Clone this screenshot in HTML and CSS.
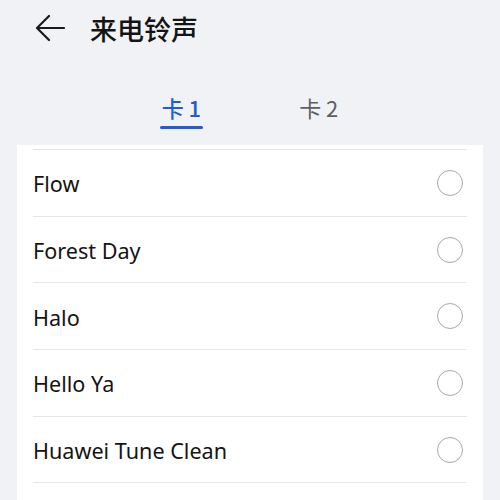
FILE: index.html
```html
<!DOCTYPE html>
<html lang="zh">
<head>
<meta charset="utf-8">
<link rel="stylesheet" href="styles.css">
</head>
<body>
<div class="screen">
  <header class="topbar">
    <svg class="back" width="30" height="28" viewBox="0 0 30 28">
      <path d="M2 14 H29 M14 2 L2 14 L14 26" fill="none" stroke="#1a1a1a" stroke-width="2.2" stroke-linecap="round" stroke-linejoin="round"/>
    </svg>
    <h1 class="title">来电铃声</h1>
  </header>
  <nav class="tabs">
    <div class="tab active">卡 1</div>
    <div class="tab">卡 2</div>
  </nav>
  <section class="card">
    <div class="lead"></div>
    <div class="row"><span class="name">Flow</span><span class="radio"></span></div>
    <div class="row"><span class="name">Forest Day</span><span class="radio"></span></div>
    <div class="row"><span class="name">Halo</span><span class="radio"></span></div>
    <div class="row"><span class="name">Hello Ya</span><span class="radio"></span></div>
    <div class="row"><span class="name">Huawei Tune Clean</span><span class="radio"></span></div>
    <div class="row"><span class="name"></span></div>
  </section>
</div>
</body>
</html>
```
FILE: styles.css
```css
html, body {
  margin: 0;
  padding: 0;
  background: #f1f2f5;
}
.screen {
  width: 500px;
  height: 500px;
  overflow: hidden;
  font-family: "Noto Sans", "Noto Sans CJK SC", sans-serif;
  color: #141414;
}
.topbar {
  height: 56px;
  display: flex;
  align-items: center;
  padding-left: 35px;
  box-sizing: border-box;
}
.back {
  display: block;
}
.title {
  margin: 0 0 0 25px;
  font-family: "Noto Sans CJK SC", sans-serif;
  font-size: 27px;
  font-weight: 500;
  line-height: 1;
  color: #141414;
}
.tabs {
  height: 89px;
  display: flex;
  justify-content: center;
  gap: 94px;
  padding-top: 36px;
  box-sizing: border-box;
}
.tab {
  font-family: "Noto Sans CJK SC", sans-serif;
  font-size: 22px;
  line-height: 30px;
  height: 37px;
  color: #5f5f5f;
  padding: 0 2px;
  box-sizing: border-box;
  position: relative;
}
.tab.active {
  color: #1f5dd3;
  font-weight: 500;
}
.tab.active::after {
  content: "";
  position: absolute;
  left: 0;
  right: 0;
  bottom: 0;
  height: 3px;
  border-radius: 1.5px;
  background: #1f5dd3;
}
.card {
  margin: 0 17px;
  background: #fff;
  padding: 0 16px;
}
.lead {
  height: 4px;
  border-bottom: 1px solid #e6e6e6;
}
.row {
  height: 65.7px;
  border-bottom: 1px solid #e6e6e6;
  display: flex;
  align-items: center;
  justify-content: space-between;
}
.name {
  font-size: 21.6px;
  color: #141414;
  padding-top: 2px;
}
.radio {
  width: 24px;
  height: 24px;
  border: 1.6px solid #a8a8a8;
  border-radius: 50%;
  margin-right: 4px;
}
```
